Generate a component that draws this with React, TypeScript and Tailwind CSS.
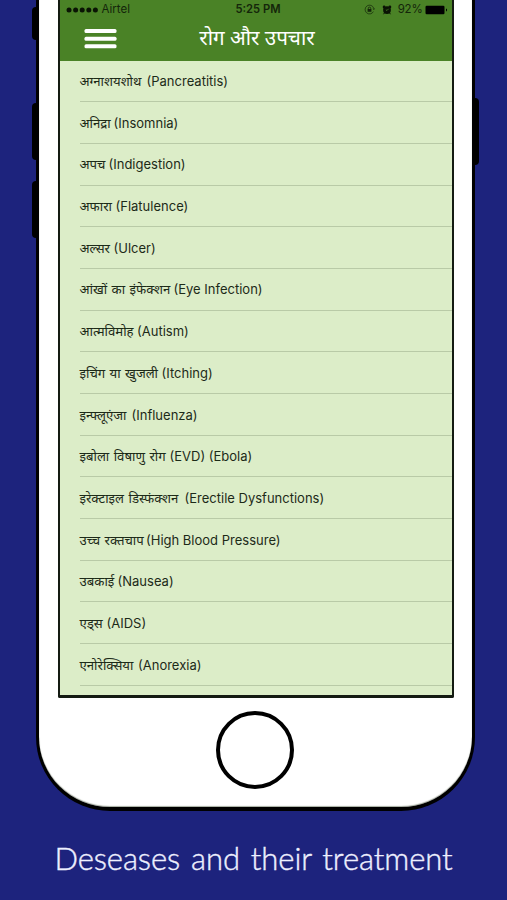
import React from 'react';

const diseases = [
  { hindi: 'अग्नाशयशोथ', english: '(Pancreatitis)', hindiWidth: 67 },
  { hindi: 'अनिद्रा', english: '(Insomnia)', hindiWidth: 34 },
  { hindi: 'अपच', english: '(Indigestion)', hindiWidth: 29 },
  { hindi: 'अफारा', english: '(Flatulence)', hindiWidth: 36 },
  { hindi: 'अल्सर', english: '(Ulcer)', hindiWidth: 34 },
  { hindi: 'आंखों का इंफेक्शन', english: '(Eye Infection)', hindiWidth: 94 },
  { hindi: 'आत्मविमोह', english: '(Autism)', hindiWidth: 57.5 },
  { hindi: 'इचिंग या खुजली', english: '(Itching)', hindiWidth: 82 },
  { hindi: 'इन्फ्लूएंजा', english: '(Influenza)', hindiWidth: 52 },
  { hindi: 'इबोला विषाणु रोग', english: '(EVD) (Ebola)', hindiWidth: 90 },
  { hindi: 'इरेक्टाइल डिस्फंक्शन', english: '(Erectile Dysfunctions)', hindiWidth: 105 },
  { hindi: 'उच्च रक्तचाप', english: '(High Blood Pressure)', hindiWidth: 66.5 },
  { hindi: 'उबकाई', english: '(Nausea)', hindiWidth: 38 },
  { hindi: 'एड्स', english: '(AIDS)', hindiWidth: 27 },
  { hindi: 'एनोरेक्सिया', english: '(Anorexia)', hindiWidth: 58.5 },
];

function StatusBar() {
  return (
    <div className="grid h-[19px] grid-cols-3 items-center pr-[4px] pl-[6px] text-[11.5px] leading-none text-[#14260a]">
      <div className="flex items-center gap-[3px]">
        <svg width="33" height="6" viewBox="0 0 33 6" fill="#0a1404">
          <circle cx="3" cy="3" r="2.5" />
          <circle cx="9.6" cy="3" r="2.5" />
          <circle cx="16.2" cy="3" r="2.5" />
          <circle cx="22.8" cy="3" r="2.5" />
          <circle cx="29.4" cy="3" r="2.5" />
        </svg>
        <span className="pt-px">Airtel</span>
      </div>
      <span className="pt-px pl-[3px] text-center text-[11.2px] font-semibold whitespace-nowrap">5:25 PM</span>
      <div className="flex items-center justify-end">
        {/* Rotation lock */}
        <svg className="mr-[7px]" width="11" height="11" viewBox="0 0 11 11" fill="none" stroke="#14260a">
          <path d="M9.4 7.6A4.4 4.4 0 1 1 9.7 4.2" strokeWidth="0.7" />
          <path d="M8.6 4.4H11L9.9 6.1Z" fill="#14260a" stroke="none" />
          <rect x="3.6" y="5" width="3.8" height="2.8" fill="#14260a" stroke="none" />
          <path d="M4.3 5.2V4.3a1.2 1.2 0 0 1 2.4 0v.9" strokeWidth="0.8" />
        </svg>
        {/* Alarm */}
        <svg className="mr-[6px]" width="10" height="10" viewBox="0 0 10 10" fill="#0a1404">
          <circle cx="5" cy="5.1" r="3.9" />
          <circle cx="2.1" cy="2" r="1.4" />
          <circle cx="7.9" cy="2" r="1.4" />
          <path d="M2.6 7.6L1.6 9.2M7.4 7.6l1 1.6" stroke="#0a1404" />
          <path d="M6.6 3.8L5 5.5L3.9 4.8" fill="none" stroke="#4a8226" strokeWidth="0.8" />
        </svg>
        <span className="mr-[2px] pt-px text-[11.5px] tracking-[-0.2px]">92%</span>
        <svg width="23" height="10" viewBox="0 0 23 10" fill="#000">
          <rect x="0.5" y="0.8" width="19" height="8.4" rx="1.2" />
          <path d="M21 3.5a1.6 1.6 0 0 1 0 3Z" />
        </svg>
      </div>
    </div>
  );
}

export default function App() {
  return (
    <div className="flex h-[900px] w-[507px] flex-col overflow-hidden bg-[#1d237d] font-['Inter','Noto_Sans',sans-serif]">
      <div className="flex h-[811px] pl-[32px]">
        {/* Left side buttons */}
        <div className="flex w-1 flex-col pt-[7px]">
          <div className="h-[33px] rounded-l-sm bg-black" />
          <div className="mt-[63px] h-[57px] rounded-l-sm bg-black" />
          <div className="mt-[21px] h-[57px] rounded-l-sm bg-black" />
        </div>

        {/* Phone body */}
        <div className="flex w-[439px] flex-col items-center rounded-b-[74px] border-x-[3px] border-b-4 border-black bg-white shadow-[inset_0_-1px_1px_#a6ada0]">
          <div className="flex h-[698px] w-[396px] flex-col overflow-hidden rounded-b-[2px] border-x-2 border-b-[3px] border-[#141b12] bg-[#dcedc8]">
            <div className="h-[60.5px] shrink-0 bg-[#4a8226]">
              <StatusBar />
              <div className="grid h-[40px] grid-cols-[1fr_auto_1fr] items-center">
                <svg className="ml-[24px]" width="33" height="22" viewBox="0 0 33 22" fill="#fff">
                  <rect x="0.5" y="1" width="32" height="4" rx="1.5" />
                  <rect x="0.5" y="8.7" width="32" height="4" rx="1.5" />
                  <rect x="0.5" y="16.2" width="32" height="4" rx="1.5" />
                </svg>
                <h1 className="pb-[3px] pl-[3px] font-['Noto_Sans',sans-serif] text-[20.6px] leading-none whitespace-nowrap text-white">रोग और उपचार</h1>
              </div>
            </div>

            <ul className="pl-[20px]">
              {diseases.map((item) => (
                <li
                  key={item.english}
                  className="flex h-[41.68px] flex-col justify-center border-b border-[#b9caa7] pt-[0.6px] text-[13px] whitespace-nowrap text-[#1c2a18]"
                >
                  <div className="flex h-5 items-baseline leading-5">
                    <span
                      className="shrink-0 font-['Noto_Sans',sans-serif] text-[13.2px] [word-spacing:1px]"
                      style={{ width: item.hindiWidth }}
                    >
                      {item.hindi}
                    </span>
                    <span>{item.english}</span>
                  </div>
                </li>
              ))}
            </ul>
          </div>

          {/* Home button */}
          <div className="mt-[13px] mr-[1.5px] size-[78px] rounded-full border-4 border-black" />
        </div>

        {/* Power button */}
        <div className="mt-[98px] h-[67px] w-1 rounded-r-sm bg-black" />
      </div>

      <p className="pt-[25px] text-center font-['Lato',sans-serif] text-[31px] leading-[44px] font-light tracking-[-0.07px] whitespace-nowrap text-[#eef0ff] [-webkit-text-stroke:0.4px_#eef0ff] [word-spacing:2.5px]">
        Deseases and their treatment
      </p>
    </div>
  );
}
